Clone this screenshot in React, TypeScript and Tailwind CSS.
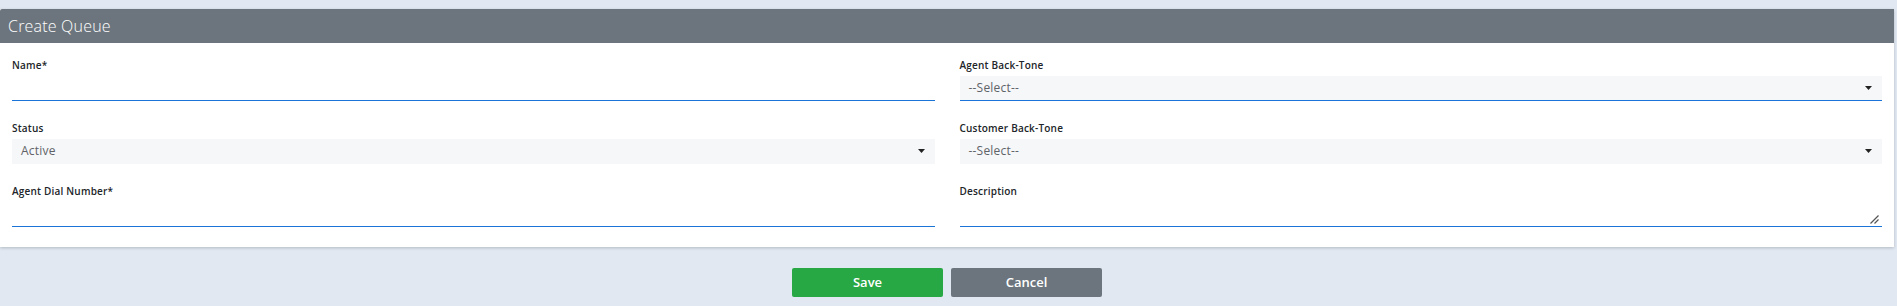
import React from 'react';

const font = { fontFamily: '"Open Sans", "Noto Sans", sans-serif' };

function Caret() {
  return (
    <svg width="7" height="4" viewBox="0 0 7 4" className="shrink-0">
      <path d="M0 0 H7 L3.5 4 Z" fill="#222" />
    </svg>
  );
}

function Label({ children }: { children: React.ReactNode }) {
  return <label className="block text-[10px] leading-[14px] font-semibold tracking-[0.2px] text-[#212529] mb-[4px]">{children}</label>;
}

function TextField({ label }: { label: string }) {
  return (
    <div>
      <Label>{label}</Label>
      <input className="block w-full h-[25px] bg-transparent border-b border-[#1b74d8] outline-none text-[12px]" />
    </div>
  );
}

function SelectField({ label, value, underline }: { label: string; value: string; underline?: boolean }) {
  return (
    <div>
      <Label>{label}</Label>
      <div
        className={`flex items-center justify-between h-[25px] bg-[#f6f7f9] pl-[9px] pr-[10px] border-b ${
          underline ? 'border-[#1b74d8]' : 'border-[#f6f7f9]'
        }`}
      >
        <span className="text-[12px] tracking-[0.2px] text-[#5f6368]">{value}</span>
        <Caret />
      </div>
    </div>
  );
}

function TextAreaField({ label }: { label: string }) {
  return (
    <div>
      <Label>{label}</Label>
      <div className="relative h-[25px] border-b border-[#1b74d8]">
        <textarea className="block w-full h-full bg-transparent outline-none resize-none text-[12px]" />
        <svg width="9" height="9" viewBox="0 0 9 9" className="absolute right-[3px] bottom-[2px]">
          <path d="M8.5 0.5 L0.5 8.5 M8.5 4.5 L4.5 8.5" stroke="#555" strokeWidth="1.2" />
        </svg>
      </div>
    </div>
  );
}

export default function App() {
  return (
    <div className="w-[1897px] h-[306px] bg-[#e1e8f1] pt-[9px]" style={font}>
      {/* Card */}
      <div className="mr-[3px] bg-white shadow-[0_1px_3px_rgba(0,0,0,0.2)]">
        <div className="h-[34px] bg-[#6c757d] flex items-center px-[8px] rounded-tl-[2px]">
          <h1 className="text-[16px] font-light tracking-[0.2px] text-white">Create Queue</h1>
        </div>
        <div className="grid grid-cols-2 gap-x-[25px] gap-y-[20px] px-[12px] pt-[15px] pb-[20px]">
          <TextField label="Name*" />
          <SelectField label="Agent Back-Tone" value="--Select--" underline />
          <SelectField label="Status" value="Active" />
          <SelectField label="Customer Back-Tone" value="--Select--" />
          <TextField label="Agent Dial Number*" />
          <TextAreaField label="Description" />
        </div>
      </div>

      {/* Actions */}
      <div className="flex justify-center gap-[8px] mt-[21px] pr-[3px]">
        <button className="w-[151px] h-[29px] rounded-[2px] bg-[#28a745] text-white text-[13px] font-semibold">Save</button>
        <button className="w-[151px] h-[29px] rounded-[2px] bg-[#6c757d] text-white text-[13px] font-semibold">Cancel</button>
      </div>
    </div>
  );
}
